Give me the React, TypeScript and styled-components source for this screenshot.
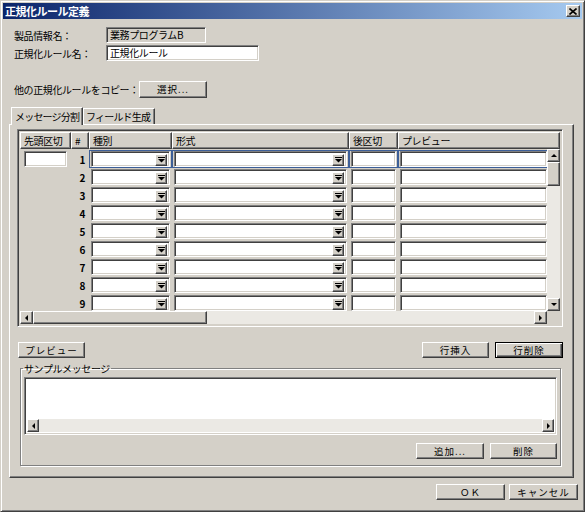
import styled, { createGlobalStyle, css } from 'styled-components';

const GlobalStyle = createGlobalStyle`
    html, body {
        margin: 0;
        padding: 0;
        background: #ffffff;
    }
    body {
        font-family: 'Noto Sans CJK JP', 'Liberation Sans', sans-serif;
        font-size: 10px;
        letter-spacing: -0.4px;
        color: #000;
    }
`;

// classic 3d borders
const sunken = css`
    box-sizing: border-box;
    border: 1px solid;
    border-color: #808080 #ffffff #ffffff #808080;
    box-shadow: inset 1px 1px #404040, inset -1px -1px #d4d0c8;
`;

const raised = css`
    box-sizing: border-box;
    border: 1px solid;
    border-color: #ffffff #404040 #404040 #ffffff;
    box-shadow: inset -1px -1px #808080;
    background: #d4d0c8;
`;

const COLS = '51px 18px 83px 177px 49px 1fr';
const ROWS = [1, 2, 3, 4, 5, 6, 7, 8, 9];

const Win = styled.div`
    width: 585px;
    height: 512px;
    box-sizing: border-box;
    background: #d4d0c8;
    border: 1px solid;
    border-color: #d4d0c8 #404040 #404040 #d4d0c8;
    box-shadow: inset 1px 1px #ffffff, inset -1px -1px #808080;
    padding: 2px;
    display: flex;
    flex-direction: column;
    overflow: hidden;
`;

const TitleBar = styled.div`
    height: 16px;
    flex-shrink: 0;
    display: flex;
    align-items: center;
    justify-content: space-between;
    padding: 0 2px 0 2px;
    background: linear-gradient(to right, #0a246a, #a6caf0);
    color: #ffffff;
    font-weight: bold;
    font-size: 11px;
    letter-spacing: -0.5px;
`;

const CloseBtn = styled.div`
    ${raised};
    width: 14px;
    height: 12px;
    display: flex;
    align-items: center;
    justify-content: center;
`;

const Body = styled.div`
    display: flex;
    flex-direction: column;
`;

const FieldRow = styled.div<{ $top: number }>`
    display: flex;
    align-items: center;
    margin-top: ${(p) => p.$top}px;
    padding-left: 11px;
    height: 16px;
`;

const Label = styled.div<{ $w: number }>`
    width: ${(p) => p.$w}px;
    white-space: nowrap;
`;

const TextField = styled.div<{ $w: number; $readonly?: boolean }>`
    ${sunken};
    width: ${(p) => p.$w}px;
    height: 16px;
    padding: 0 3px;
    line-height: 14px;
    background: ${(p) => (p.$readonly ? '#d4d0c8' : '#ffffff')};
    white-space: nowrap;
`;

const Button = styled.div<{ $w: number; $h?: number; $default?: boolean }>`
    ${raised};
    width: ${(p) => p.$w}px;
    height: ${(p) => p.$h ?? 16}px;
    display: flex;
    align-items: center;
    justify-content: center;
    letter-spacing: 1px;
    font-size: 9.5px;
    ${(p) =>
        p.$default &&
        css`
            border: 1px solid #000;
            box-shadow: inset 1px 1px #ffffff, inset -1px -1px #404040, inset -2px -2px #808080;
        `}
`;

const TabStrip = styled.div`
    margin-top: 9px;
    height: 18px;
    padding-left: 8px;
    display: flex;
    align-items: flex-end;
`;

const Tab = styled.div<{ $w: number; $active?: boolean }>`
    box-sizing: border-box;
    width: ${(p) => p.$w}px;
    height: ${(p) => (p.$active ? 18 : 16)}px;
    border: 1px solid;
    border-bottom: none;
    border-color: #ffffff #404040 #404040 #ffffff;
    box-shadow: inset -1px 0 #808080;
    display: flex;
    align-items: center;
    padding-left: ${(p) => (p.$active ? 3 : 2)}px;
    letter-spacing: -0.8px;
    white-space: nowrap;
    overflow: hidden;
    position: relative;
    z-index: ${(p) => (p.$active ? 1 : 0)};
    margin-bottom: ${(p) => (p.$active ? -1 : 0)}px;
    background: #d4d0c8;
`;

const Panel = styled.div`
    ${raised};
    margin-left: 6px;
    width: 565px;
    height: 354px;
    padding: 4px 0 0 7px;
    display: flex;
    flex-direction: column;
`;

const GridBox = styled.div`
    ${sunken};
    width: 546px;
    height: 198px;
    padding: 2px;
    display: flex;
    flex-direction: column;
    background: #d4d0c8;
`;

const HeaderRow = styled.div`
    display: grid;
    grid-template-columns: ${COLS};
    height: 17px;
    flex-shrink: 0;
`;

const HeadCell = styled.div`
    ${raised};
    padding-left: 3px;
    display: flex;
    align-items: center;
    white-space: nowrap;
    overflow: hidden;
`;

const GridMiddle = styled.div`
    flex: 1;
    display: flex;
    overflow: hidden;
`;

const RowsArea = styled.div`
    flex: 1;
    padding-top: 1px;
    overflow: hidden;
`;

const Row = styled.div`
    display: grid;
    grid-template-columns: 51px 18px 83px 177px 49px 151px;
    height: 18px;
`;

const Cell = styled.div<{ $sel?: boolean }>`
    box-sizing: border-box;
    border: 1px solid ${(p) => (p.$sel ? '#3d5f98' : 'transparent')};
    display: flex;
    align-items: center;
    padding: 0 1px;
`;

const NumCell = styled.div`
    display: flex;
    align-items: center;
    justify-content: flex-end;
    padding-right: 4px;
    font-size: 10px;
    font-weight: bold;
`;

const Input = styled.div<{ $mx?: number }>`
    ${sunken};
    flex: 1;
    height: 16px;
    margin: 0 ${(p) => p.$mx ?? 0}px;
    background: #ffffff;
`;

const Combo = styled.div`
    ${sunken};
    flex: 1;
    height: 16px;
    background: #ffffff;
    display: flex;
    justify-content: flex-end;
    padding: 2px;
`;

const ArrowBtn = styled.div<{ $w?: number; $h?: number }>`
    ${raised};
    width: ${(p) => p.$w ?? 12}px;
    height: ${(p) => p.$h ?? 12}px;
    flex-shrink: 0;
    display: flex;
    align-items: center;
    justify-content: center;
`;

const VScroll = styled.div`
    width: 13px;
    display: flex;
    flex-direction: column;
    background: #ebe9e4;
`;

const VThumb = styled.div`
    ${raised};
    height: 24px;
`;

const HScroll = styled.div`
    height: 13px;
    flex-shrink: 0;
    display: flex;
    background: #ebe9e4;
`;

const HThumb = styled.div<{ $w: number }>`
    ${raised};
    width: ${(p) => p.$w}px;
`;

const Track = styled.div`
    flex: 1;
`;

const Corner = styled.div`
    width: 13px;
    background: #d4d0c8;
`;

const ButtonRow = styled.div<{ $top: number; $w: number }>`
    margin-top: ${(p) => p.$top}px;
    width: ${(p) => p.$w}px;
    display: flex;
    align-items: center;
    gap: 6px;
`;

const Spacer = styled.div`
    flex: 1;
`;

const GroupBox = styled.fieldset`
    margin: 5px 0 0 3px;
    width: 541px;
    height: 103px;
    box-sizing: border-box;
    border: 1px solid #808080;
    box-shadow: inset 1px 1px #ffffff, 1px 1px #ffffff;
    padding: 0 3px 0 3px;
    display: flex;
    flex-direction: column;
`;

const Legend = styled.legend`
    padding: 0 1px;
    margin-left: -1px;
    font-size: 10px;
    line-height: 11px;
`;

const MsgArea = styled.div`
    ${sunken};
    height: 58px;
    margin-top: 3px;
    padding: 2px;
    background: #ffffff;
    display: flex;
    flex-direction: column;
    justify-content: flex-end;
`;

const MsgScroll = styled.div`
    height: 13px;
    display: flex;
    justify-content: space-between;
    background: #ebe9e4;
`;

const Footer = styled.div`
    margin-top: 6px;
    padding-right: 4px;
    display: flex;
    justify-content: flex-end;
    gap: 4px;
`;

const Arrow = ({ dir }: { dir: 'up' | 'down' | 'left' | 'right' }) => {
    const pts = {
        down: '0,0 6,0 3,3',
        up: '0,3 6,3 3,0',
        left: '3,0 3,6 0,3',
        right: '0,0 0,6 3,3',
    }[dir];
    const vertical = dir === 'up' || dir === 'down';
    return (
        <svg width={vertical ? 6 : 3} height={vertical ? 3 : 6} viewBox={vertical ? '0 0 6 3' : '0 0 3 6'}>
            <polygon points={pts} fill="#000" />
        </svg>
    );
};

const ComboArrow = () => (
    <svg width="7" height="6" viewBox="0 0 7 6">
        <rect x="0" y="0" width="7" height="1" fill="#000" />
        <polygon points="0,2 7,2 3.5,5.5" fill="#000" />
    </svg>
);

const App = () => {
    return (
        <>
            <GlobalStyle />
            <Win>
                <TitleBar>
                    <span>正規化ルール定義</span>
                    <CloseBtn>
                        <svg width="8" height="7" viewBox="0 0 8 7">
                            <path d="M0.5 0.5 L7.5 6.5 M7.5 0.5 L0.5 6.5" stroke="#000" strokeWidth="1.6" />
                        </svg>
                    </CloseBtn>
                </TitleBar>
                <Body>
                    <FieldRow $top={8}>
                        <Label $w={92}>製品情報名：</Label>
                        <TextField $w={100} $readonly>
                            業務プログラムB
                        </TextField>
                    </FieldRow>
                    <FieldRow $top={2}>
                        <Label $w={92}>正規化ルール名：</Label>
                        <TextField $w={153}>正規化ルール</TextField>
                    </FieldRow>
                    <FieldRow $top={20}>
                        <Label $w={125}>他の正規化ルールをコピー：</Label>
                        <Button $w={68} $h={17}>
                            選択...
                        </Button>
                    </FieldRow>

                    <TabStrip>
                        <Tab $w={72} $active>
                            メッセージ分割
                        </Tab>
                        <Tab $w={72}>フィールド生成</Tab>
                    </TabStrip>
                    <Panel>
                        <GridBox>
                            <HeaderRow>
                                <HeadCell>先頭区切</HeadCell>
                                <HeadCell>#</HeadCell>
                                <HeadCell>種別</HeadCell>
                                <HeadCell>形式</HeadCell>
                                <HeadCell>後区切</HeadCell>
                                <HeadCell>プレビュー</HeadCell>
                            </HeaderRow>
                            <GridMiddle>
                                <RowsArea>
                                    {ROWS.map((n) => {
                                        const sel = n === 1;
                                        return (
                                            <Row key={n}>
                                                <Cell>{sel && <Input $mx={2} />}</Cell>
                                                <NumCell>{n}</NumCell>
                                                <Cell $sel={sel}>
                                                    <Combo>
                                                        <ArrowBtn>
                                                            <ComboArrow />
                                                        </ArrowBtn>
                                                    </Combo>
                                                </Cell>
                                                <Cell $sel={sel}>
                                                    <Combo>
                                                        <ArrowBtn>
                                                            <ComboArrow />
                                                        </ArrowBtn>
                                                    </Combo>
                                                </Cell>
                                                <Cell $sel={sel}>
                                                    <Input />
                                                </Cell>
                                                <Cell $sel={sel}>
                                                    <Input />
                                                </Cell>
                                            </Row>
                                        );
                                    })}
                                </RowsArea>
                                <VScroll>
                                    <ArrowBtn $w={13} $h={13}>
                                        <Arrow dir="up" />
                                    </ArrowBtn>
                                    <VThumb />
                                    <Track />
                                    <ArrowBtn $w={13} $h={13}>
                                        <Arrow dir="down" />
                                    </ArrowBtn>
                                </VScroll>
                            </GridMiddle>
                            <HScroll>
                                <ArrowBtn $w={13} $h={13}>
                                    <Arrow dir="left" />
                                </ArrowBtn>
                                <HThumb $w={174} />
                                <Track />
                                <ArrowBtn $w={13} $h={13}>
                                    <Arrow dir="right" />
                                </ArrowBtn>
                                <Corner />
                            </HScroll>
                        </GridBox>

                        <ButtonRow $top={15} $w={546}>
                            <Button $w={67} style={{ marginLeft: 1 }}>
                                プレビュー
                            </Button>
                            <Spacer />
                            <Button $w={67}>行挿入</Button>
                            <Button $w={68} $default>
                                行削除
                            </Button>
                        </ButtonRow>

                        <GroupBox>
                            <Legend>サンプルメッセージ</Legend>
                            <MsgArea>
                                <MsgScroll>
                                    <ArrowBtn $w={12} $h={13}>
                                        <Arrow dir="left" />
                                    </ArrowBtn>
                                    <ArrowBtn $w={12} $h={13}>
                                        <Arrow dir="right" />
                                    </ArrowBtn>
                                </MsgScroll>
                            </MsgArea>
                            <ButtonRow $top={8} $w={533}>
                                <Spacer />
                                <Button $w={68}>追加...</Button>
                                <Button $w={67}>削除</Button>
                            </ButtonRow>
                        </GroupBox>
                    </Panel>

                    <Footer>
                        <Button $w={69}>ＯＫ</Button>
                        <Button $w={69}>キャンセル</Button>
                    </Footer>
                </Body>
            </Win>
        </>
    );
};

export default App;
